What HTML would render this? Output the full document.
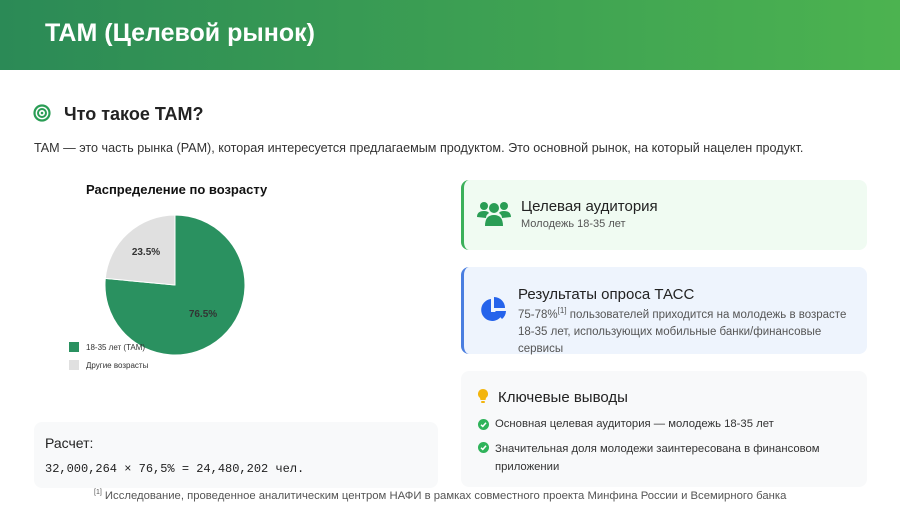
<!DOCTYPE html>
<html><head><meta charset="utf-8"><style>
*{margin:0;padding:0;box-sizing:border-box}
body{width:900px;height:506px;overflow:hidden;background:#fff;font-family:"Liberation Sans","DejaVu Sans",sans-serif;position:relative;color:#222}
.hdr{position:absolute;left:0;top:0;width:900px;height:70px;background:linear-gradient(90deg,#2b8a56,#4cb350)}
.hdr h1{position:absolute;left:45px;top:19px;font-size:25px;color:#fff;font-weight:bold}
.abs{position:absolute}
.card{position:absolute;border-radius:8px}
</style></head><body>
<div class="hdr"><h1>TAM (Целевой рынок)</h1></div>
<svg class="abs" style="left:33px;top:104px" width="18" height="18" viewBox="0 0 18 18"><circle cx="9" cy="9" r="7.5" fill="none" stroke="#2a9d55" stroke-width="2.2"/><circle cx="9" cy="9" r="4" fill="none" stroke="#2a9d55" stroke-width="2"/><circle cx="9" cy="9" r="1.3" fill="#2a9d55"/></svg>
<div class="abs" style="left:64px;top:104px;font-size:18px;font-weight:bold">Что такое TAM?</div>
<div class="abs" style="left:34px;top:141px;font-size:12.6px;color:#333">TAM — это часть рынка (PAM), которая интересуется предлагаемым продуктом. Это основной рынок, на который нацелен продукт.</div>

<div class="abs" style="left:86px;top:182px;font-size:13px;font-weight:bold;color:#111">Распределение по возрасту</div>
<svg class="abs" style="left:0;top:0" width="300" height="380">
<path d="M175 285 L175 215 A70 70 0 1 1 105.3 278.4 Z" fill="#2a9160" stroke="#fff" stroke-width="1"/>
<path d="M175 285 L105.3 278.4 A70 70 0 0 1 175 215 Z" fill="#e0e0e0" stroke="#fff" stroke-width="1"/>
<text x="146" y="255" font-size="10" font-weight="bold" fill="#333" text-anchor="middle" font-family="Liberation Sans">23.5%</text>
<text x="203" y="317" font-size="10" font-weight="bold" fill="#333" text-anchor="middle" font-family="Liberation Sans">76.5%</text>
<rect x="69" y="342" width="10" height="10" fill="#2a9160"/>
<text x="86" y="350" font-size="8" fill="#333" font-family="Liberation Sans">18-35 лет (TAM)</text>
<rect x="69" y="360" width="10" height="10" fill="#e0e0e0"/>
<text x="86" y="368" font-size="8" fill="#333" font-family="Liberation Sans">Другие возрасты</text>
</svg>

<div class="card" style="left:34px;top:422px;width:404px;height:66px;background:#f8f9fa"></div>
<div class="abs" style="left:45px;top:435px;font-size:14px;color:#222">Расчет:</div>
<div class="abs" style="left:45px;top:462px;font-size:12px;font-family:'Liberation Mono',monospace;color:#222">32,000,264 × 76,5% = 24,480,202 чел.</div>

<div class="card" style="left:461px;top:180px;width:406px;height:70px;background:#f0fbf2;border-left:3px solid #3bb05a"></div>
<svg class="abs" style="left:477px;top:199px" width="34" height="28" viewBox="0 0 34 28"><circle cx="7" cy="7" r="4" fill="#2a9d55"/><circle cx="27" cy="7" r="4" fill="#2a9d55"/><circle cx="17" cy="9" r="5" fill="#2a9d55"/><path d="M0 18 Q0 12 7 12 Q11 12 12 14 Q9 16 9 19Z M34 18 Q34 12 27 12 Q23 12 22 14 Q25 16 25 19Z M8 27 Q8 16 17 16 Q26 16 26 27Z" fill="#2a9d55"/></svg>
<div class="abs" style="left:521px;top:198px;font-size:15px;color:#222">Целевая аудитория</div>
<div class="abs" style="left:521px;top:218px;font-size:11px;color:#555">Молодежь 18-35 лет</div>

<div class="card" style="left:461px;top:267px;width:406px;height:87px;background:#eef4fd;border-left:3px solid #4a7ee0"></div>
<svg class="abs" style="left:479px;top:296px" width="28" height="28" viewBox="0 0 28 28"><path d="M12 3 A11 11 0 1 0 24 16 L12 16Z" fill="#2563eb"/><path d="M15 1 A11 11 0 0 1 26 12 L15 12Z" fill="#2563eb"/><path d="M16 15 L27 15 A11 11 0 0 1 23 23Z" fill="#2563eb"/></svg>
<div class="abs" style="left:518px;top:286px;font-size:15px;color:#222">Результаты опроса ТАСС</div>
<div class="abs" style="left:518px;top:302px;width:340px;font-size:11.5px;line-height:17px;color:#555">75-78%<sup style="font-size:8px">[1]</sup> пользователей приходится на молодежь в возрасте 18-35 лет, использующих мобильные банки/финансовые сервисы</div>

<div class="card" style="left:461px;top:371px;width:406px;height:116px;background:#f8f9fa"></div>
<svg class="abs" style="left:478px;top:389px" width="10" height="15" viewBox="0 0 10 15"><path d="M5 0 A5 5 0 0 1 8 9 L7.5 11 L2.5 11 L2 9 A5 5 0 0 1 5 0Z" fill="#f3b50d"/><rect x="3" y="12" width="4" height="2" rx="1" fill="#f3b50d"/></svg>
<div class="abs" style="left:498px;top:389px;font-size:15px;color:#222">Ключевые выводы</div>
<svg class="abs" style="left:478px;top:419px" width="11" height="11"><circle cx="5.5" cy="5.5" r="5.5" fill="#2fb35a"/><path d="M3 5.8 L4.8 7.4 L8 3.8" stroke="#fff" stroke-width="1.5" fill="none"/></svg>
<div class="abs" style="left:495px;top:418px;font-size:11.3px;color:#333">Основная целевая аудитория — молодежь 18-35 лет</div>
<svg class="abs" style="left:478px;top:442px" width="11" height="11"><circle cx="5.5" cy="5.5" r="5.5" fill="#2fb35a"/><path d="M3 5.8 L4.8 7.4 L8 3.8" stroke="#fff" stroke-width="1.5" fill="none"/></svg>
<div class="abs" style="left:495px;top:440px;width:360px;font-size:11.3px;line-height:18px;color:#333">Значительная доля молодежи заинтересована в финансовом приложении</div>

<div class="abs" style="left:94px;top:489px;font-size:11.3px;color:#555"><sup style="font-size:7px">[1]</sup> Исследование, проведенное аналитическим центром НАФИ в рамках совместного проекта Минфина России и Всемирного банка</div>
</body></html>
